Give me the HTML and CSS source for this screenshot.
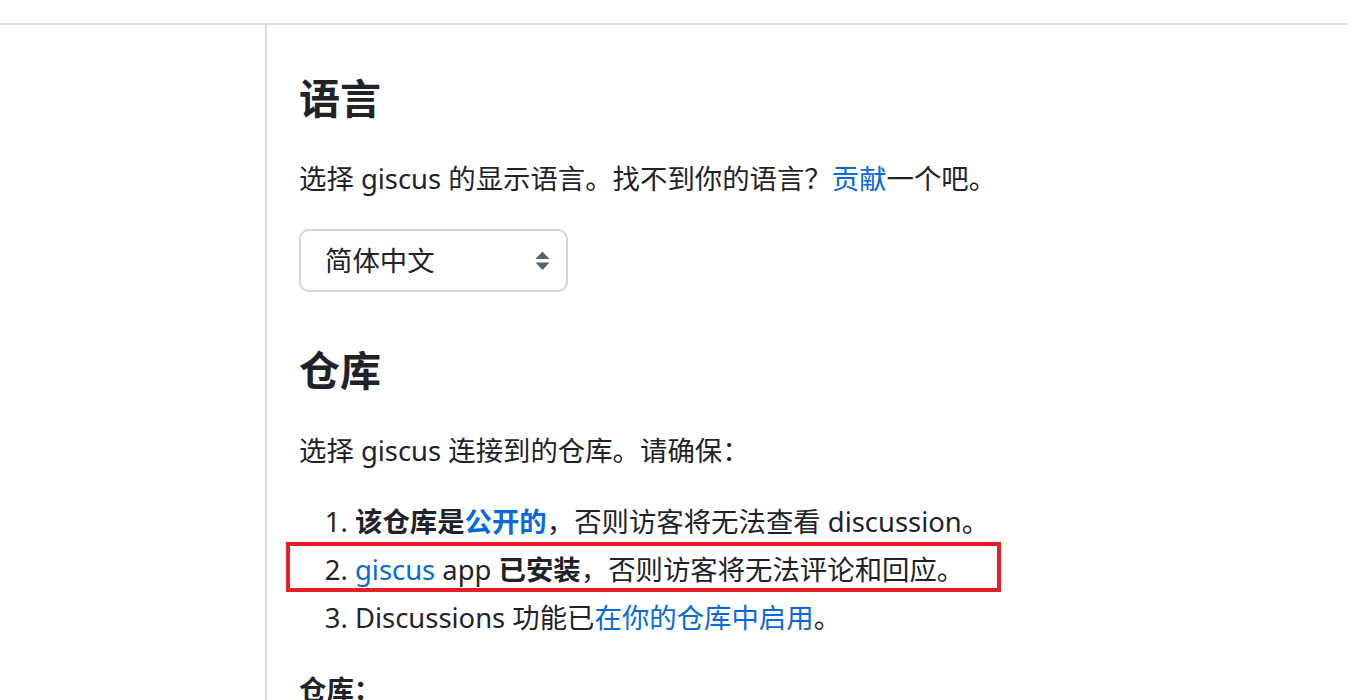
FILE: index.html
```html
<!DOCTYPE html>
<html lang="zh-CN">
<head>
<meta charset="utf-8">
<title>giscus</title>
<link rel="stylesheet" href="styles.css">
</head>
<body>
<header class="topbar"></header>
<div class="layout">
  <aside class="sidebar"></aside>
  <main class="content">
    <h2 class="heading">语言</h2>
    <p class="para">选择 giscus 的显示语言。找不到你的语言？<a class="link" href="#">贡献</a>一个吧。</p>
    <div class="select">
      <span class="select-text">简体中文</span>
      <svg class="select-icon" width="15" height="20" viewBox="0 0 15 20" aria-hidden="true">
        <path d="M7.5 0.5 L14.5 8 L0.5 8 Z" fill="#59636e"/>
        <path d="M0.5 11.5 L14.5 11.5 L7.5 19 Z" fill="#59636e"/>
      </svg>
    </div>
    <h2 class="heading heading-second">仓库</h2>
    <p class="para">选择 giscus 连接到的仓库。请确保：</p>
    <ol class="steps">
      <li class="step"><strong>该仓库是<a class="link" href="#">公开的</a></strong>，否则访客将无法查看 discussion。</li>
      <li class="step step-marked"><a class="link" href="#">giscus</a> app <strong>已安装</strong>，否则访客将无法评论和回应。</li>
      <li class="step">Discussions 功能已<a class="link" href="#">在你的仓库中启用</a>。</li>
    </ol>
    <p class="label"><strong>仓库：</strong></p>
  </main>
</div>
</body>
</html>
```

FILE: styles.css
```css
html, body {
  margin: 0;
  padding: 0;
  background: #ffffff;
}

body {
  font-family: "Noto Sans", "Noto Sans CJK SC", sans-serif;
  font-size: 27.4px;
  line-height: 41px;
  color: #1f2328;
  overflow: hidden;
  height: 700px;
}

.topbar {
  height: 23px;
  border-bottom: 2px solid #dfdfdf;
}

.layout {
  display: flex;
  height: 675px;
}

.sidebar {
  width: 265px;
  flex: 0 0 265px;
  border-right: 2px solid #d6dbe1;
}

.content {
  flex: 1;
  padding: 48px 0 0 32px;
}

.heading {
  margin: 0 0 34px 0;
  font-size: 41px;
  line-height: 51px;
  font-weight: 700;
  color: #1f2328;
}

.heading-second {
  margin-top: 53px;
}

.para {
  margin: 0;
}

.link {
  color: #0969da;
  text-decoration: none;
}

strong {
  font-weight: 700;
}

.select {
  margin-top: 30px;
  width: 269px;
  height: 63px;
  box-sizing: border-box;
  border: 2px solid #d0d7de;
  border-radius: 10px;
  display: flex;
  align-items: center;
  justify-content: space-between;
  padding: 0 16px 0 24px;
}

.select-text {
  color: #1f2328;
}

.select-icon {
  display: block;
}

.steps {
  margin: 30px 0 0 0;
  padding-left: 56px;
}

.step {
  margin: 0;
}

.step + .step {
  margin-top: 7px;
}

.step-marked {
  position: relative;
}

.step-marked::after {
  content: "";
  position: absolute;
  left: -69px;
  top: -7px;
  width: 715px;
  height: 50px;
  box-sizing: border-box;
  border: 4px solid #e51f27;
  pointer-events: none;
}

.label {
  margin: 31px 0 0 0;
}
```
